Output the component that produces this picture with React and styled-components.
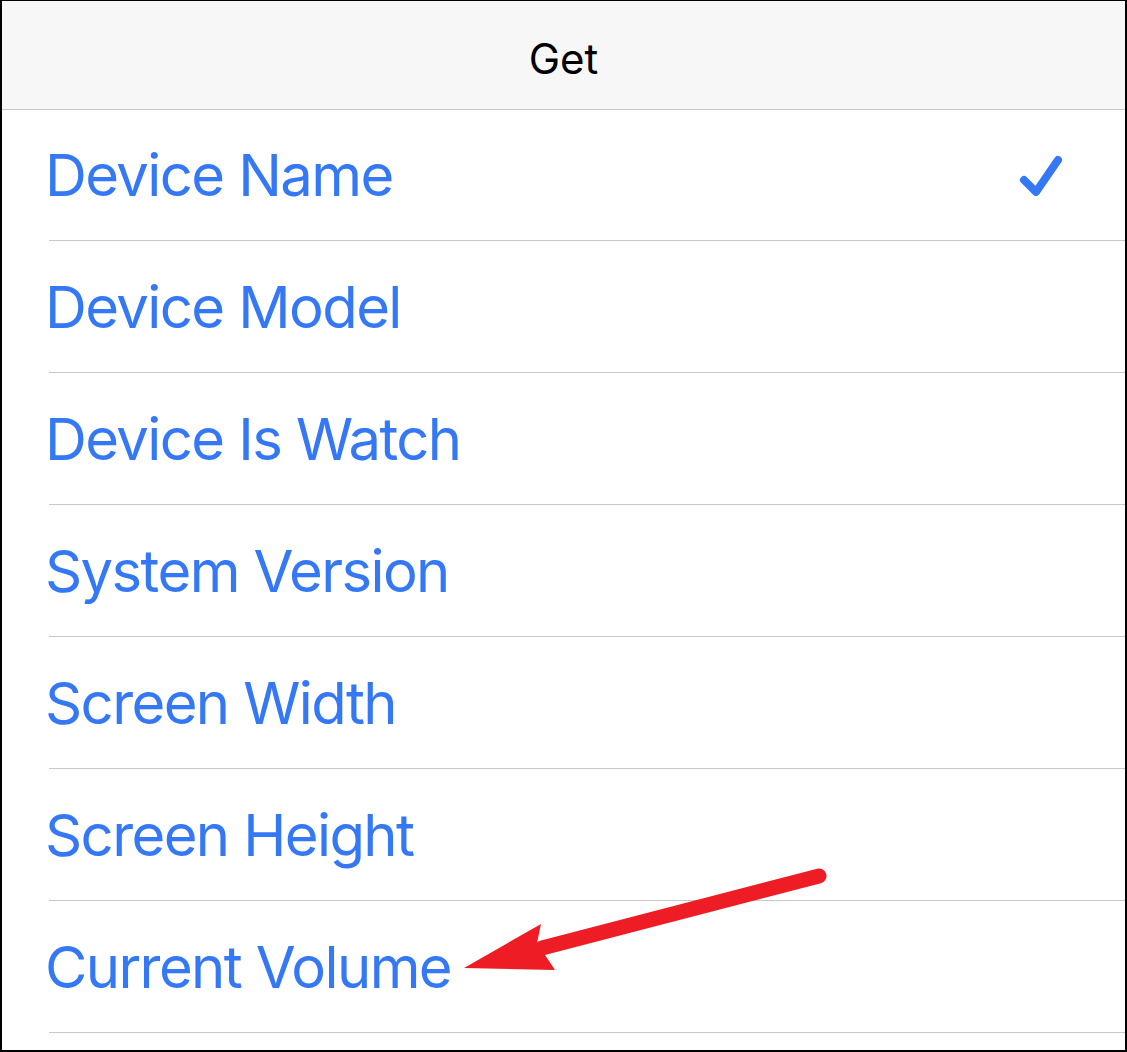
import React from 'react'
import styled, { createGlobalStyle } from 'styled-components'

const GlobalStyle = createGlobalStyle`
	html, body {
		margin: 0;
		padding: 0;
		background: #fff;
	}
	* {
		box-sizing: border-box;
	}
`

const Frame = styled.div`
	position: relative;
	width: 1127px;
	height: 1052px;
	border-style: solid;
	border-color: #000;
	border-width: 1px 2px 2px 2px;
	background: #fff;
	overflow: hidden;
	font-family: Inter, "Liberation Sans", sans-serif;
`

const Header = styled.div`
	height: 109px;
	padding-top: 6px;
	background: #f7f7f7;
	border-bottom: 1px solid #c8c8c8;
	display: flex;
	align-items: center;
	justify-content: center;
	font-size: 42px;
	color: #000;
`

const List = styled.ul`
	list-style: none;
	margin: 0;
	padding: 0;
`

const Row = styled.li`
	height: ${p => (p.first ? 131 : 132)}px;
	padding-left: 47px;
	display: flex;
	align-items: stretch;
`

const RowInner = styled.div`
	flex: 1;
	display: flex;
	align-items: center;
	justify-content: space-between;
	border-bottom: 1px solid #c8c8c8;
	padding-right: 63px;
`

const Label = styled.span`
	margin-left: -4px;
	font-size: 58px;
	letter-spacing: -1.6px;
	color: #3478f6;
`

const Check = styled.svg`
	width: 44px;
	height: 42px;
	margin-top: 2px;
`

const Arrow = styled.svg`
	position: absolute;
	left: 0;
	top: 0;
	pointer-events: none;
`

const items = [
	'Device Name',
	'Device Model',
	'Device Is Watch',
	'System Version',
	'Screen Width',
	'Screen Height',
	'Current Volume'
]

export default function App() {
	return (
		<>
			<GlobalStyle />
			<Frame>
				<Header>Get</Header>
				<List>
					{items.map((name, i) => (
						<Row key={name} first={i === 0}>
							<RowInner>
								<Label>{name}</Label>
								{i === 0 ? (
									<Check viewBox="0 0 44 42">
										<path
											d="M6 25 L18 37 L40 5"
											fill="none"
											stroke="#3478f6"
											strokeWidth="8"
											strokeLinecap="round"
											strokeLinejoin="round"
										/>
									</Check>
								) : null}
							</RowInner>
						</Row>
					))}
				</List>
				<Arrow width="1127" height="1052" viewBox="0 0 1127 1052">
					<line x1="817" y1="875" x2="540" y2="947" stroke="#ee1c25" strokeWidth="15" strokeLinecap="round" />
					<polygon points="462,967 539,923 535,942 553,969" fill="#ee1c25" />
				</Arrow>
			</Frame>
		</>
	)
}
